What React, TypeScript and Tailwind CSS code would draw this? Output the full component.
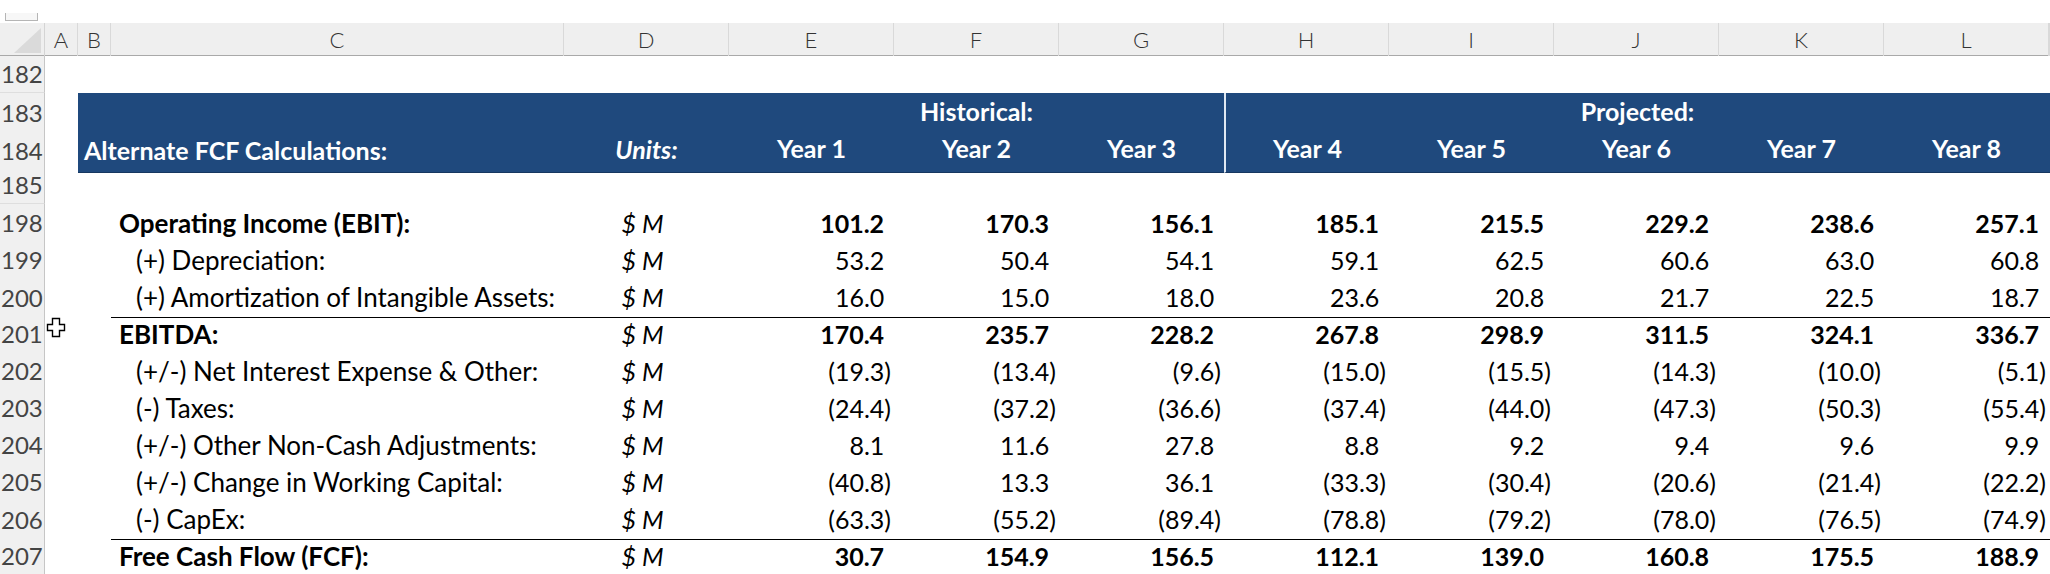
import React from "react";

const GRID =
  "grid grid-cols-[45px_33px_33px_453px_165px_165px_165px_165px_165px_165px_165px_165px_165px_1fr]";

const letters = ["", "A", "B", "C", "D", "E", "F", "G", "H", "I", "J", "K", "L", ""];

type Line = {
  n: number;
  label: string;
  bold?: boolean;
  sub?: boolean;
  line?: boolean;
  vals: string[];
};

const lines: Line[] = [
  { n: 198, label: "Operating Income (EBIT):", bold: true, vals: ["101.2", "170.3", "156.1", "185.1", "215.5", "229.2", "238.6", "257.1"] },
  { n: 199, label: "(+) Depreciation:", sub: true, vals: ["53.2", "50.4", "54.1", "59.1", "62.5", "60.6", "63.0", "60.8"] },
  { n: 200, label: "(+) Amortization of Intangible Assets:", sub: true, line: true, vals: ["16.0", "15.0", "18.0", "23.6", "20.8", "21.7", "22.5", "18.7"] },
  { n: 201, label: "EBITDA:", bold: true, vals: ["170.4", "235.7", "228.2", "267.8", "298.9", "311.5", "324.1", "336.7"] },
  { n: 202, label: "(+/-) Net Interest Expense & Other:", sub: true, vals: ["(19.3)", "(13.4)", "(9.6)", "(15.0)", "(15.5)", "(14.3)", "(10.0)", "(5.1)"] },
  { n: 203, label: "(-) Taxes:", sub: true, vals: ["(24.4)", "(37.2)", "(36.6)", "(37.4)", "(44.0)", "(47.3)", "(50.3)", "(55.4)"] },
  { n: 204, label: "(+/-) Other Non-Cash Adjustments:", sub: true, vals: ["8.1", "11.6", "27.8", "8.8", "9.2", "9.4", "9.6", "9.9"] },
  { n: 205, label: "(+/-) Change in Working Capital:", sub: true, vals: ["(40.8)", "13.3", "36.1", "(33.3)", "(30.4)", "(20.6)", "(21.4)", "(22.2)"] },
  { n: 206, label: "(-) CapEx:", sub: true, line: true, vals: ["(63.3)", "(55.2)", "(89.4)", "(78.8)", "(79.2)", "(78.0)", "(76.5)", "(74.9)"] },
  { n: 207, label: "Free Cash Flow (FCF):", bold: true, vals: ["30.7", "154.9", "156.5", "112.1", "139.0", "160.8", "175.5", "188.9"] },
];

const RowNum = ({ n }: { n: number }) => (
  <div className="flex items-center pl-[1px] bg-[#f0f0f0] border-r border-[#c6c6c6] border-b border-b-[#dedede] text-[24px] font-normal not-italic text-[#444]">
    {n}
  </div>
);

// accounting style: positives leave room for the closing paren
const Num = ({ v }: { v: string }) => {
  const neg = v.startsWith("(");
  return (
    <div className="flex items-center justify-end pr-[3px]">
      {v}
      {!neg && <span className="invisible">)</span>}
    </div>
  );
};

const Cursor = () => (
  <svg className="absolute left-[46px] top-[317px]" width="20" height="21" viewBox="0 0 20 21">
    <path
      d="M6.5 1.5h7v6h5v6h-5v6h-7v-6h-5v-6h5z"
      fill="#fff"
      stroke="#000"
      strokeWidth="1.4"
    />
  </svg>
);

export default function App() {
  return (
    <div className="relative w-[2050px] h-[574px] overflow-hidden bg-white font-['Lato','Noto_Sans',sans-serif] text-black">
      {/* name box remnant */}
      <div className="h-[23px] pt-[13px] pl-[5px]">
        <div className="w-[33px] h-[8px] border border-[#b5b5b5] border-t-0 bg-[#f7f7f7]" />
      </div>

      {/* column letters */}
      <div className={`${GRID} h-[33px] bg-[#efefef] border-b border-[#a9a9a9]`}>
        {letters.map((l, i) =>
          i === 0 ? (
            <div key={i} className="flex items-end justify-end pr-[3px] pb-[3px] border-r border-[#d4d4d4]">
              <svg width="27" height="25" viewBox="0 0 27 25">
                <path d="M27 0V25H0z" fill="#dadada" />
              </svg>
            </div>
          ) : (
            <div
              key={i}
              className="flex items-center justify-center border-r border-[#d9d9d9] text-[22px] font-light text-[#333]"
            >
              {l}
            </div>
          )
        )}
      </div>

      {/* 182 */}
      <div className={`${GRID} h-[37px]`}>
        <RowNum n={182} />
      </div>

      {/* 183 */}
      <div className={`${GRID} h-[37px] text-white font-bold text-[25px]`}>
        <RowNum n={183} />
        <div />
        <div className="col-span-3 bg-[#1f497d]" />
        <div className="col-span-3 bg-[#1f497d] flex items-center justify-center pb-[2px] border-b-2 border-[#9cc2e5]">
          Historical:
        </div>
        <div className="col-span-5 bg-[#1f497d] flex items-center justify-center pb-[2px] border-b-2 border-[#9cc2e5] border-l-2 border-l-[#dfe8f2]">
          Projected:
        </div>
        <div className="bg-[#1f497d]" />
      </div>

      {/* 184 */}
      <div className={`${GRID} h-[37px] text-white font-bold text-[25px]`}>
        <RowNum n={184} />
        <div />
        <div className="col-span-2 bg-[#1f497d] border-b border-[#163760] flex items-center pl-[6px] whitespace-nowrap">
          Alternate FCF Calculations:
        </div>
        <div className="bg-[#1f497d] border-b border-[#163760] flex items-center justify-center pb-[2px] italic">
          Units:
        </div>
        {[1, 2, 3, 4, 5, 6, 7, 8].map((y) => (
          <div
            key={y}
            className={`bg-[#1f497d] border-b border-[#163760] flex items-center justify-center pb-[4px] ${
              y === 4 ? "border-l-2 border-l-[#dfe8f2]" : ""
            }`}
          >
            Year {y}
          </div>
        ))}
        <div className="bg-[#1f497d] border-b border-[#163760]" />
      </div>

      {/* 185 */}
      <div className={`${GRID} h-[37px]`}>
        <RowNum n={185} />
      </div>

      {lines.map((r) => (
        <div key={r.n} className={`${GRID} h-[37px] text-[25px] ${r.bold ? "font-bold" : ""}`}>
          <RowNum n={r.n} />
          <div />
          <div />
          <div
            className={`flex items-center whitespace-nowrap text-[26px] ${r.sub ? "pl-[25px]" : "pl-[8px]"} ${
              r.line ? "border-b border-black" : ""
            }`}
          >
            {r.label}
          </div>
          <div
            className={`flex items-center justify-center pr-[8px] italic font-normal ${
              r.line ? "border-b border-black" : ""
            }`}
          >
            $ M
          </div>
          {r.vals.map((v, i) => (
            <div key={i} className={`flex justify-end ${r.line ? "border-b border-black" : ""}`}>
              <Num v={v} />
            </div>
          ))}
          <div className={r.line ? "border-b border-black" : ""} />
        </div>
      ))}

      <Cursor />
    </div>
  );
}
